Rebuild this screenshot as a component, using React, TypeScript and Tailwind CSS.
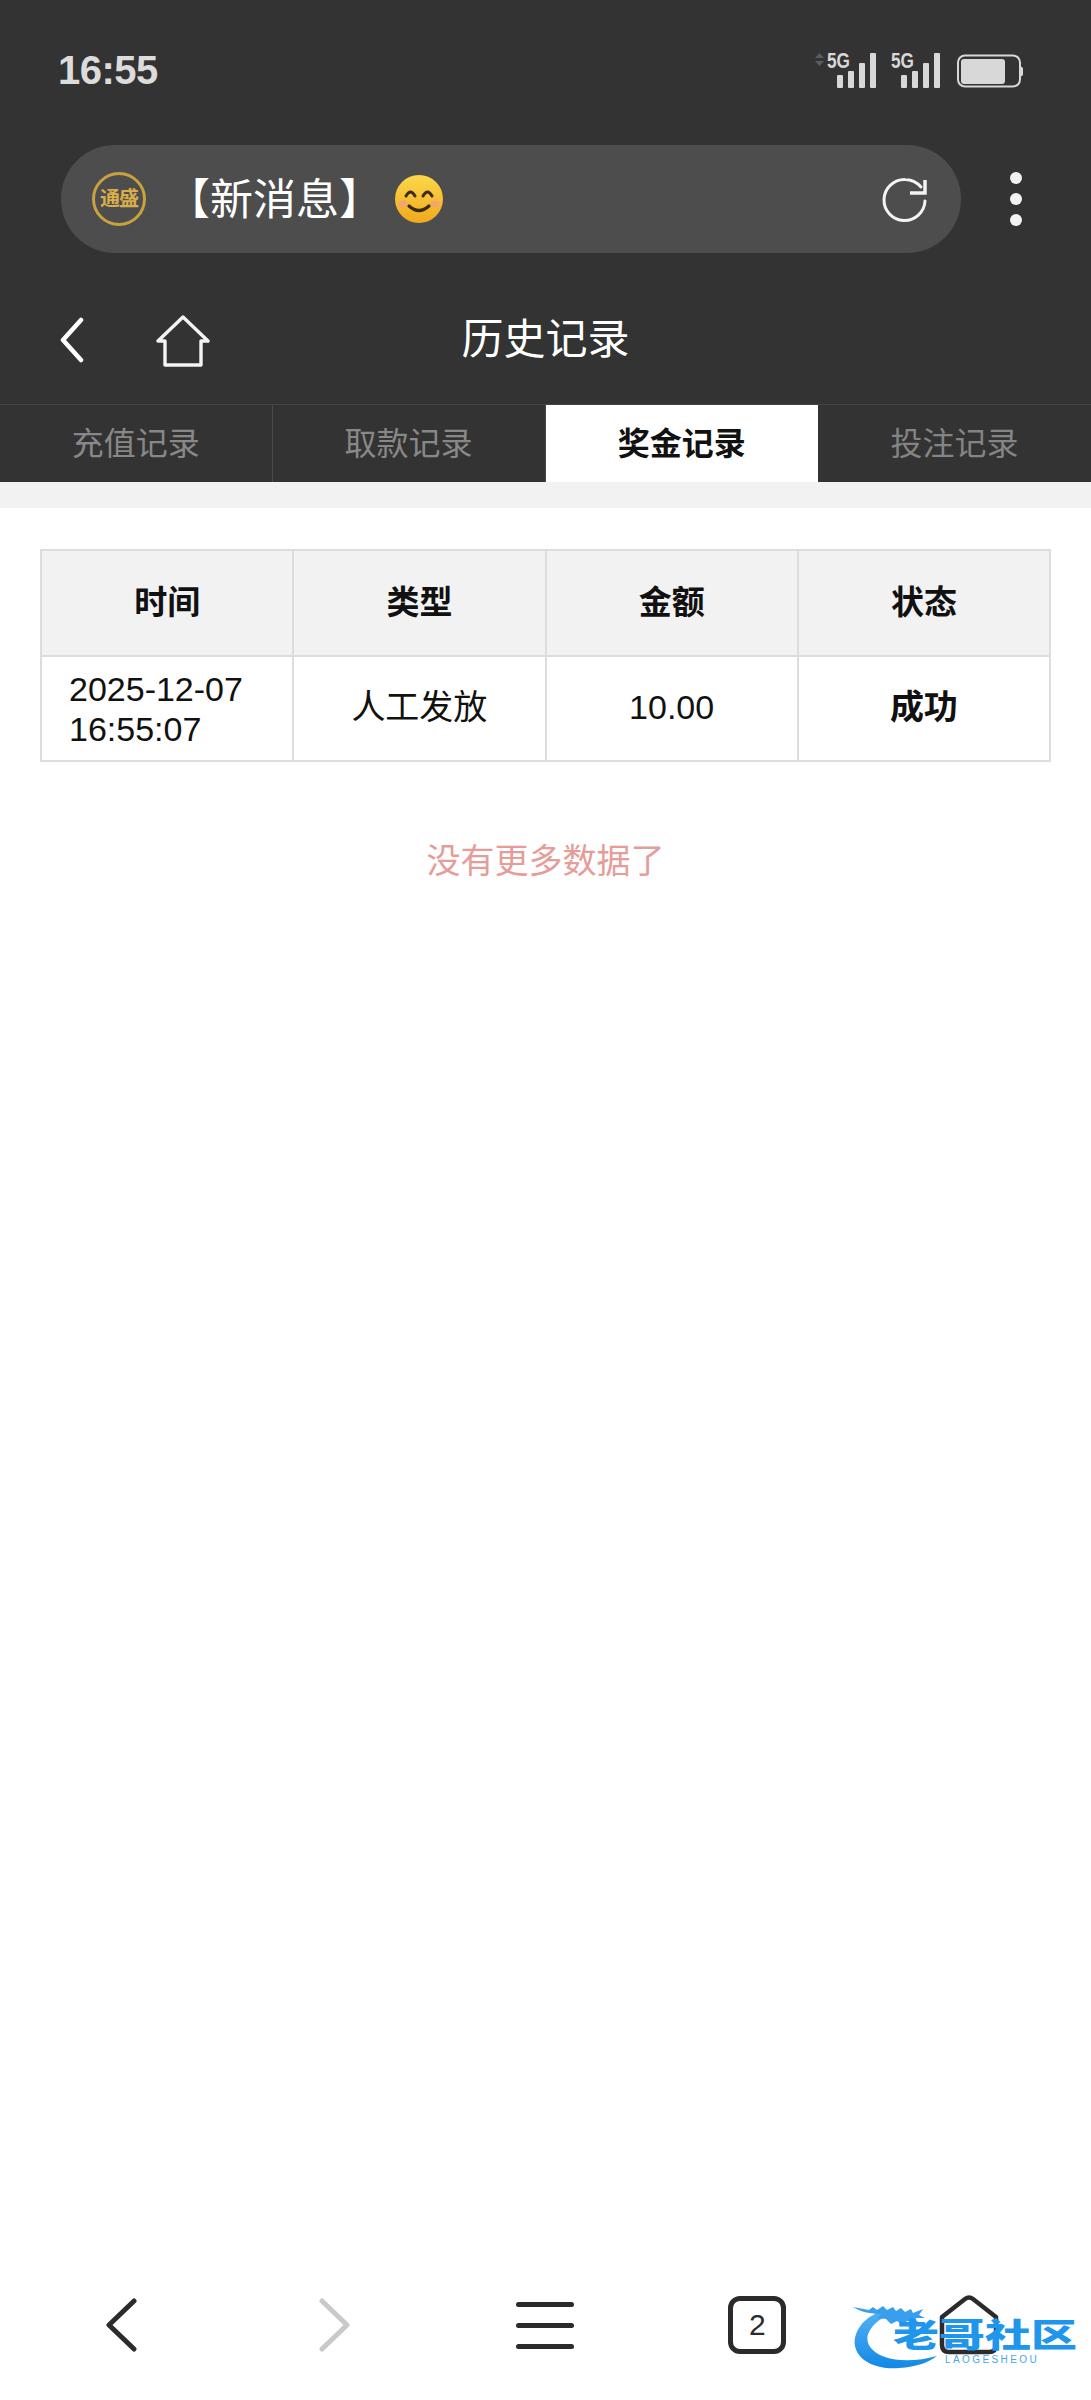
import React from "react";

const FONT = '"Liberation Sans","Noto Sans CJK SC",sans-serif';

function StatusIcons() {
  const bars = (x: number) => (
    <g fill="#d8d8d8">
      <rect x={x} y={22} width={6} height={13} rx={1} />
      <rect x={x + 11} y={18} width={6} height={17} rx={1} />
      <rect x={x + 22} y={10} width={6} height={25} rx={1} />
      <rect x={x + 33} y={0} width={6} height={35} rx={1} />
    </g>
  );
  return (
    <svg width="208" height="44" viewBox="0 -8 208 44">
      <path d="M4.500 0 L9 5 H0 Z M0 8 H9 L4.500 13 Z" fill="#5c5c5c" />
      <text x="12" y="15" fontFamily={FONT} fontWeight="700" fontSize="22" fill="#d8d8d8" textLength="23" lengthAdjust="spacingAndGlyphs">5G</text>
      {bars(22)}
      <text x="76" y="15" fontFamily={FONT} fontWeight="700" fontSize="22" fill="#d8d8d8" textLength="23" lengthAdjust="spacingAndGlyphs">5G</text>
      {bars(86)}
      <rect x="143" y="2.500" width="62" height="31" rx="7" fill="none" stroke="#d8d8d8" strokeWidth="2" />
      <rect x="146" y="6" width="44" height="25" rx="3" fill="#d8d8d8" />
      <path d="M205.500 13 L208 15 V22 L205.500 24 Z" fill="#d8d8d8" />
    </svg>
  );
}

function Smile() {
  return (
    <svg width="48" height="48" viewBox="0 0 48 48" className="shrink-0">
      <defs>
        <linearGradient id="sg" x1="0" y1="0" x2="0" y2="1">
          <stop offset="0" stopColor="#fbd84a" />
          <stop offset="1" stopColor="#f2a81c" />
        </linearGradient>
      </defs>
      <circle cx="24" cy="24" r="24" fill="url(#sg)" />
      <ellipse cx="8" cy="29" rx="5" ry="3.500" fill="#f3a27a" opacity="0.8" />
      <ellipse cx="40" cy="29" rx="5" ry="3.500" fill="#f3a27a" opacity="0.8" />
      <path d="M11 21 Q15.500 13 20 21 M28 21 Q32.500 13 37 21" fill="none" stroke="#3a2a1a" strokeWidth="3" strokeLinecap="round" />
      <path d="M14 31 Q24 40 34 31" fill="none" stroke="#3a2a1a" strokeWidth="3.200" strokeLinecap="round" />
    </svg>
  );
}

function Reload() {
  return (
    <svg width="48" height="48" viewBox="0 0 48 48" className="shrink-0">
      <path d="M45 26 A20.500 20.500 0 1 1 25 4.500 C 32 4.500 37 7.500 41 12" fill="none" stroke="#f4f4f4" strokeWidth="3" strokeLinecap="round" />
      <path d="M30 18 H45 V5" fill="none" stroke="#f4f4f4" strokeWidth="3.500" />
    </svg>
  );
}

function Watermark() {
  return (
    <div className="absolute left-[853px] top-[2304px] w-[224px] h-[70px] pointer-events-none">
      <svg width="224" height="70" viewBox="0 0 224 70" className="absolute left-0 top-0">
        <defs>
          <linearGradient id="wm" x1="0" y1="0" x2="0" y2="1">
            <stop offset="0" stopColor="#52b0f2" />
            <stop offset="1" stopColor="#1288e6" />
          </linearGradient>
        </defs>
        <path d="M24 9 C8 16 0 30 2 42 C5 58 26 66 46 64 C64 63 76 58 84 52 C66 57 46 58 32 53 C18 48 11 38 16 28 C20 20 27 15 34 12 Z" fill="url(#wm)" />
        <path d="M0 3 L16 6 L20 3 L24 6 L30 2 L34 6 L40 3 L43 7 L48 4 L52 8 L58 5 L60 9 L70 5 L66 11 L72 14 L60 14 L68 20 L54 17 L50 21 L44 17 L38 20 L33 15 L24 14 L28 10 C18 10 8 8 0 3 Z" fill="#3a9eee" />
      </svg>
      <div className="absolute left-[40px] top-[15px] flex w-[182px] origin-top scale-y-[0.72] justify-between text-[46px] leading-[46px] font-black text-[#2095ec]">
        <span className="w-[44px] text-center">老</span>
        <span className="w-[44px] text-center">哥</span>
        <span className="w-[44px] text-center">社</span>
        <span className="w-[44px] text-center">区</span>
      </div>
      <div className="absolute left-[92px] top-[50px] w-[110px] text-[10px] leading-[12px] tracking-[2.400px] text-[#4aa5ee] whitespace-nowrap">
        LAOGESHEOU
      </div>
    </div>
  );
}

export default function App() {
  const tabs = ["充值记录", "取款记录", "奖金记录", "投注记录"];
  return (
    <div className="relative flex h-[2400px] w-[1091px] flex-col overflow-hidden bg-white" style={{ fontFamily: FONT }}>
      <header className="bg-[#333333]">
        <div className="flex h-[145px] items-start justify-between pl-[58px] pr-[68px]">
          <span className="mt-[47px] text-[40px] leading-[46px] font-bold tracking-[-0.500px] text-[#dcdcdc]">16:55</span>
          <div className="mt-[45px]">
            <StatusIcons />
          </div>
        </div>
        <div className="flex h-[108px] items-center pl-[61px]">
          <div className="flex h-full w-[900px] items-center rounded-full bg-[#4d4d4d] pl-[31px] pr-[33px]">
            <div className="flex h-[54px] w-[54px] shrink-0 items-center justify-center rounded-full border-[3px] border-[#c9a13f] text-[20px] leading-none font-bold tracking-[-1px] whitespace-nowrap text-[#d8ae4c]">
              通盛
            </div>
            <span className="ml-[21px] mt-[2px] text-[43px] leading-[56px] text-white whitespace-nowrap">【新消息】</span>
            <div className="ml-[13px]">
              <Smile />
            </div>
            <div className="ml-auto">
              <Reload />
            </div>
          </div>
          <div className="ml-[49px] flex flex-col gap-[9px]">
            <span className="h-[12px] w-[12px] rounded-full bg-[#f2f2f2]" />
            <span className="h-[12px] w-[12px] rounded-full bg-[#f2f2f2]" />
            <span className="h-[12px] w-[12px] rounded-full bg-[#f2f2f2]" />
          </div>
        </div>
        <div className="relative flex h-[151px] items-center justify-center">
          <div className="absolute left-[59px] top-[62px] flex items-start gap-[71px]">
            <svg width="26" height="46" viewBox="0 0 26 46" className="mt-[2px]">
              <path d="M22 3 L4 23 L22 43" fill="none" stroke="#ffffff" strokeWidth="4.500" strokeLinecap="round" strokeLinejoin="round" />
            </svg>
            <svg width="54" height="52" viewBox="0 0 54 52">
              <path d="M9 50 V26 H2 L27 2 L52 26 H45 V50 Z" fill="none" stroke="#f4f4f4" strokeWidth="3.400" strokeLinejoin="round" />
            </svg>
          </div>
          <h1 className="mt-[22px] text-[42px] leading-[56px] font-normal text-white">历史记录</h1>
        </div>
      </header>
      <nav className="grid h-[78px] grid-cols-4 border-t border-[#45453f] bg-[#333333]">
        {tabs.map((t, i) => (
          <div
            key={t}
            className={
              i === 2
                ? "flex items-center justify-center bg-white text-[32px] font-bold text-[#111111]"
                : i === 3
                ? "flex items-center justify-center text-[32px] text-[#848484]"
                : "flex items-center justify-center border-r border-[#4a4a46] text-[32px] text-[#888888]"
            }
          >
            {t}
          </div>
        ))}
      </nav>
      <div className="h-[26px] bg-[#f2f2f2]" />
      <main className="px-[40px] pt-[41px]">
        <table className="w-full table-fixed border-collapse border-2 border-[#dddddd] text-[34px] text-[#111111]">
          <thead>
            <tr className="h-[106px] bg-[#f2f2f2]">
              {["时间", "类型", "金额", "状态"].map((h) => (
                <th key={h} className="border-2 border-[#dddddd] text-center text-[33px] font-bold">
                  {h}
                </th>
              ))}
            </tr>
          </thead>
          <tbody>
            <tr className="h-[105px]">
              <td className="border-2 border-[#dddddd] pl-[27px] text-left leading-[40px]">
                2025-12-07
                <br />
                16:55:07
              </td>
              <td className="border-2 border-[#dddddd] pb-[2px] text-center">人工发放</td>
              <td className="border-2 border-[#dddddd] pb-[2px] text-center">10.00</td>
              <td className="border-2 border-[#dddddd] pb-[2px] text-center font-bold">成功</td>
            </tr>
          </tbody>
        </table>
        <p className="mt-[77px] text-center text-[34px] leading-[44px] text-[#e69c99]">没有更多数据了</p>
      </main>
      <footer className="mt-auto mb-[45px] grid h-[60px] grid-cols-5 px-[16px]">
        <div className="flex items-center justify-center">
          <svg width="34" height="54" viewBox="0 0 34 54">
            <path d="M29 3 L4 27 L29 51" fill="none" stroke="#2b2b2b" strokeWidth="5" strokeLinecap="round" strokeLinejoin="round" />
          </svg>
        </div>
        <div className="flex items-center justify-center">
          <svg width="34" height="54" viewBox="0 0 34 54">
            <path d="M5 3 L30 27 L5 51" fill="none" stroke="#c9c9c9" strokeWidth="5" strokeLinecap="round" strokeLinejoin="round" />
          </svg>
        </div>
        <div className="flex flex-col items-center justify-center gap-[16px]">
          <span className="h-[5px] w-[58px] rounded-full bg-[#2b2b2b]" />
          <span className="h-[5px] w-[58px] rounded-full bg-[#2b2b2b]" />
          <span className="h-[5px] w-[58px] rounded-full bg-[#2b2b2b]" />
        </div>
        <div className="flex items-center justify-center">
          <div className="flex h-[58px] w-[58px] items-center justify-center rounded-[12px] border-[5px] border-[#2b2b2b] text-[30px] leading-none text-[#2b2b2b]">
            2
          </div>
        </div>
        <div className="flex items-center justify-center">
          <svg width="60" height="60" viewBox="0 0 60 60">
            <path d="M3 22 L26 4 Q30 1 34 4 L57 22 V50 Q57 57 50 57 H10 Q3 57 3 50 Z" fill="none" stroke="#2b2b2b" strokeWidth="4.500" strokeLinejoin="round" />
          </svg>
        </div>
      </footer>
      <Watermark />
    </div>
  );
}
